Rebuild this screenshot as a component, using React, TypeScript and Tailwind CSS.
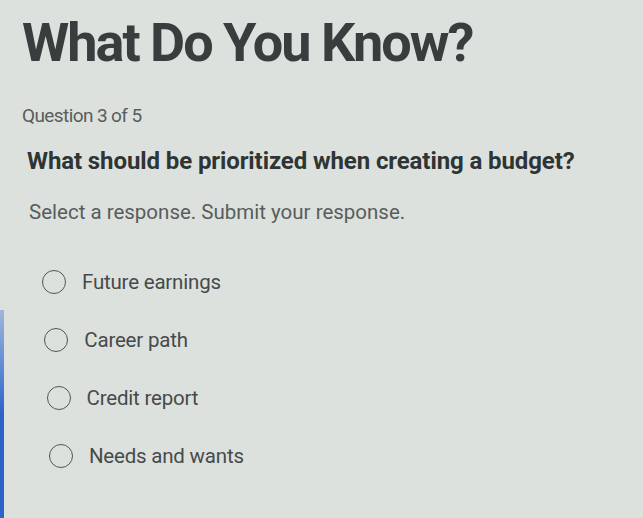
import React from 'react';

const options = ['Future earnings', 'Career path', 'Credit report', 'Needs and wants'];

const Radio = () => (
  <span className="block w-[24px] h-[24px] shrink-0 rounded-full border-[1.5px] border-[#4f5755]" />
);

const App = () => {
  return (
    <div
      className="relative w-[643px] h-[518px] overflow-hidden bg-[#dde1dd] text-[#3b4140]"
      style={{ fontFamily: 'Roboto, "Liberation Sans", sans-serif' }}
    >
      {/* left edge of screen */}
      <div className="absolute left-0 top-[310px] bottom-0 w-[4px] bg-gradient-to-b from-[#9fb6dc] via-[#2c63c9] to-[#2c63c9]" />

      <div className="flex flex-col pl-[22px] pt-[13px]">
        <h1 className="text-[54px] leading-[60px] font-bold tracking-[-2px] text-[#383e3e]">
          What Do You Know?
        </h1>

        <p className="mt-[31px] text-[19px] leading-[24px] tracking-[-0.6px] text-[#575d5c]">Question 3 of 5</p>

        <p className="mt-[17px] pl-[5px] text-[24px] leading-[32px] font-bold tracking-[-0.1px] text-[#2f3434]">
          What should be prioritized when creating a budget?
        </p>

        <p className="mt-[22px] pl-[7px] text-[20.5px] leading-[26px] tracking-[0px] text-[#575d5c]">
          Select a response. Submit your response.
        </p>

        <div className="mt-[45px] flex flex-col gap-[34px] pl-[20px]">
          {options.map((o, i) => (
            <div key={o} className="flex items-center gap-[16px] h-[24px]" style={{ marginLeft: i * 2.3 }}>
              <Radio />
              <span className="text-[20.5px] leading-[24px] tracking-[-0.2px] text-[#454b4a]">{o}</span>
            </div>
          ))}
        </div>
      </div>
    </div>
  );
};

export default App;
